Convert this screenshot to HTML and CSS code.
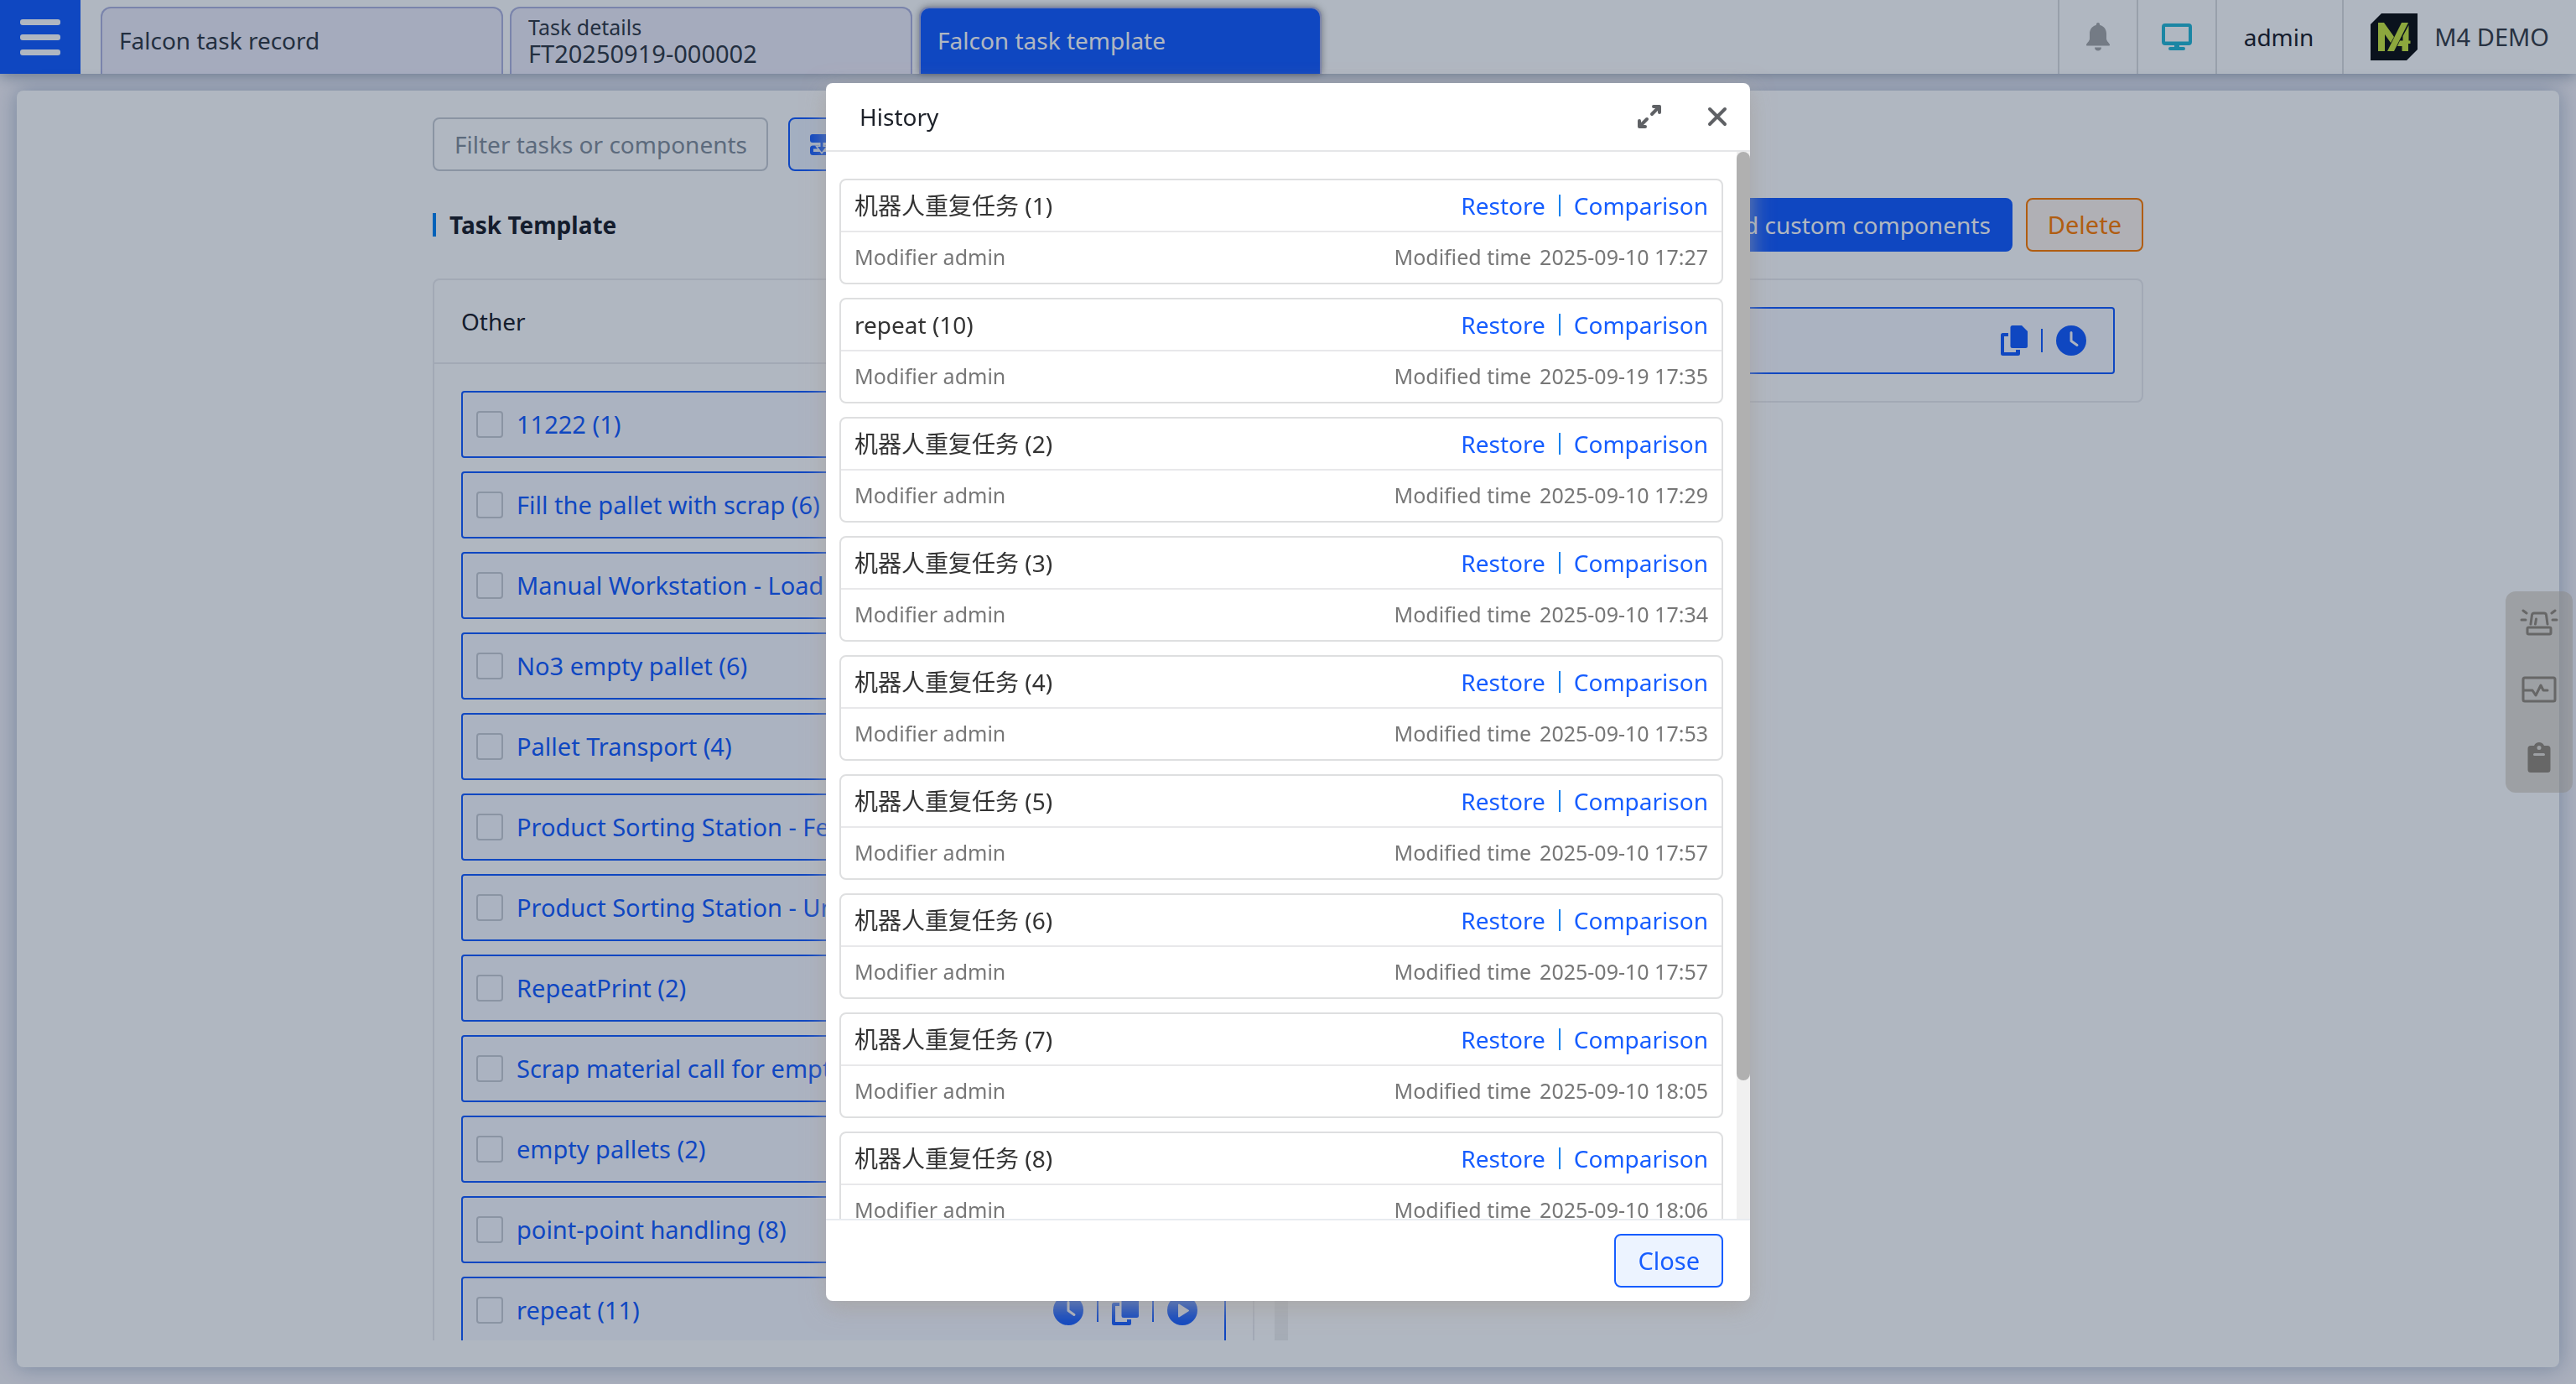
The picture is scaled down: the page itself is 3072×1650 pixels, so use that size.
FILE: index.html
```html
<!DOCTYPE html>
<html lang="en">
<head>
<meta charset="utf-8">
<title>Falcon task template</title>
<link rel="stylesheet" href="styles.css">
</head>
<body>
<svg class="sprite" aria-hidden="true">
  <symbol id="clock" viewBox="0 0 36 36"><circle cx="18" cy="18" r="18"/><path d="M18 8.500v10l7 5" fill="none" stroke="#f8f9ff" stroke-width="3" stroke-linecap="round" stroke-linejoin="round"/></symbol>
  <symbol id="copy" viewBox="0 0 32 36"><path d="M14 0h11l7 7v17.500a2.500 2.500 0 0 1-2.500 2.500H14a2.500 2.500 0 0 1-2.500-2.500v-22A2.500 2.500 0 0 1 14 0z"/><path d="M9 9v4H4v19h14v-3h5v4.500a2.500 2.500 0 0 1-2.500 2.500h-18A2.500 2.500 0 0 1 0 33.500v-22A2.500 2.500 0 0 1 2.500 9z"/></symbol>
  <symbol id="play" viewBox="0 0 36 36"><circle cx="18" cy="18" r="18"/><path d="M14 11.500v14l11-7z" fill="#f8f9ff" stroke="#f8f9ff" stroke-width="2" stroke-linejoin="round"/></symbol>
</svg>

<header class="topbar">
  <button class="menu" aria-label="Menu"><span></span><span></span><span></span></button>
  <nav class="tabs">
    <a class="tab" href="#record">Falcon task record</a>
    <a class="tab" href="#details"><small>Task details</small>FT20250919-000002</a>
    <a class="tab active" href="#template">Falcon task template</a>
  </nav>
  <div class="tools">
    <button class="cell icon-cell" aria-label="Notifications">
      <svg width="30" height="34" viewBox="0 0 30 34" fill="#a8a8a8"><path d="M15 0c1.500 0 2.200 1.200 2.200 3C22.500 4.200 25 8.500 25 13v6c0 3.500 4 5.500 4 7.500 0 .8-.4 1-1 1H2c-.6 0-1-.2-1-1C1 24.500 5 22.500 5 19v-6c0-4.500 2.500-8.800 7.800-10C12.800 1.200 13.500 0 15 0zM11 29.500h8c0 2.500-1.800 4-4 4s-4-1.500-4-4z"/></svg>
    </button>
    <button class="cell icon-cell" aria-label="Display">
      <svg width="36" height="32" viewBox="0 0 36 32" fill="none" stroke="#28b9d6"><rect x="2" y="2" width="32" height="22" rx="2" stroke-width="4"/><path d="M4 23.500h28" stroke-width="4"/><path d="M18 25v4" stroke-width="6"/><path d="M10 30h16" stroke-width="4" stroke-linecap="round"/></svg>
    </button>
    <div class="cell">admin</div>
    <div class="cell brand">
      <svg width="56" height="56" viewBox="0 0 56 56"><path d="M13 0h43v43L43 56H0V13z" fill="#0f1012"/><g fill="#cbe840"><path d="M9 11h7l10 14 2 3-4 7-7-10v20H9z"/><path d="M37 11h8L28 45h-8z"/><path d="M45.500 14v18.500H47.500V36H45v9h-7.500v-6H32l3-6.500h3.500V27z"/></g></svg>
      <span>M4 DEMO</span>
    </div>
  </div>
</header>

<main class="panel">
  <div class="content">
    <div class="filters">
      <input class="filter" type="text" placeholder="Filter tasks or components" aria-label="Filter tasks or components">
      <button class="btn soft" aria-label="Import">
        <svg width="28" height="25" viewBox="0 0 28 25" fill="#165dff"><rect width="28" height="10" rx="3"/><rect x="2" y="15.500" width="24" height="7.500" rx="1.500" fill="none" stroke="#165dff" stroke-width="4"/><path d="M12.500 10v5H9l5 6.500 5-6.500h-3.500v-5z" stroke="#ecf3ff" stroke-width="3" paint-order="stroke"/><rect x="4" width="20" height="10"/></svg>
      </button>
    </div>
    <div class="columns">
      <section class="column">
        <div class="column-head"><h2>Task Template</h2></div>
        <div class="scroller">
          <div class="scroll-view">
            <div class="card">
              <div class="card-head">Other</div>
              <ul class="items">
                <li class="item"><label><input type="checkbox">11222 (1)</label></li>
                <li class="item"><label><input type="checkbox">Fill the pallet with scrap (6)</label></li>
                <li class="item"><label><input type="checkbox">Manual Workstation - Load</label></li>
                <li class="item"><label><input type="checkbox">No3 empty pallet (6)</label></li>
                <li class="item"><label><input type="checkbox">Pallet Transport (4)</label></li>
                <li class="item"><label><input type="checkbox">Product Sorting Station - Feed</label></li>
                <li class="item"><label><input type="checkbox">Product Sorting Station - Unload</label></li>
                <li class="item"><label><input type="checkbox">RepeatPrint (2)</label></li>
                <li class="item"><label><input type="checkbox">Scrap material call for empty</label></li>
                <li class="item"><label><input type="checkbox">empty pallets (2)</label></li>
                <li class="item"><label><input type="checkbox">point-point handling (8)</label></li>
                <li class="item"><label><input type="checkbox">repeat (11)</label>
                  <span class="actions">
                    <button aria-label="History"><svg width="36" height="36"><use href="#clock"/></svg></button>
                    <button aria-label="Copy"><svg width="32" height="36"><use href="#copy"/></svg></button>
                    <button aria-label="Run"><svg width="36" height="36"><use href="#play"/></svg></button>
                  </span>
                </li>
              </ul>
            </div>
          </div>
          <div class="rail"></div>
        </div>
      </section>
      <section class="column">
        <div class="column-head end">
          <button class="btn primary">Add custom components</button>
          <button class="btn warn">Delete</button>
        </div>
        <div class="card">
          <ul class="items">
            <li class="item">
              <span class="actions">
                <button aria-label="Copy"><svg width="32" height="36"><use href="#copy"/></svg></button>
                <button aria-label="History"><svg width="36" height="36"><use href="#clock"/></svg></button>
              </span>
            </li>
          </ul>
        </div>
      </section>
    </div>
  </div>
</main>

<div class="backdrop">
  <div class="modal" role="dialog" aria-modal="true" aria-labelledby="dialog-title">
    <header class="modal-head">
      <h1 id="dialog-title">History</h1>
      <button aria-label="Full screen"><svg width="30" height="28" viewBox="0 0 30 28" fill="none" stroke="#5f6165" stroke-width="4" stroke-linecap="round" stroke-linejoin="round"><path d="M20 2h7v7M26 3l-8 8M3 19v7h7M4 25l8-8"/></svg></button>
      <button aria-label="Close dialog"><svg width="24" height="24" viewBox="0 0 24 24" fill="none" stroke="#5f6165" stroke-width="4" stroke-linecap="round"><path d="M3 3l18 18M21 3L3 21"/></svg></button>
    </header>
    <div class="modal-body">
      <div class="scroll-view versions">
        <article class="version"><div class="line"><span>机器人重复任务 (1)</span><span class="links"><a href="#r">Restore</a><a href="#c">Comparison</a></span></div><div class="line meta"><span>Modifier admin</span><span class="when"><span>Modified time</span><time>2025-09-10 17:27</time></span></div></article>
        <article class="version"><div class="line"><span>repeat (10)</span><span class="links"><a href="#r">Restore</a><a href="#c">Comparison</a></span></div><div class="line meta"><span>Modifier admin</span><span class="when"><span>Modified time</span><time>2025-09-19 17:35</time></span></div></article>
        <article class="version"><div class="line"><span>机器人重复任务 (2)</span><span class="links"><a href="#r">Restore</a><a href="#c">Comparison</a></span></div><div class="line meta"><span>Modifier admin</span><span class="when"><span>Modified time</span><time>2025-09-10 17:29</time></span></div></article>
        <article class="version"><div class="line"><span>机器人重复任务 (3)</span><span class="links"><a href="#r">Restore</a><a href="#c">Comparison</a></span></div><div class="line meta"><span>Modifier admin</span><span class="when"><span>Modified time</span><time>2025-09-10 17:34</time></span></div></article>
        <article class="version"><div class="line"><span>机器人重复任务 (4)</span><span class="links"><a href="#r">Restore</a><a href="#c">Comparison</a></span></div><div class="line meta"><span>Modifier admin</span><span class="when"><span>Modified time</span><time>2025-09-10 17:53</time></span></div></article>
        <article class="version"><div class="line"><span>机器人重复任务 (5)</span><span class="links"><a href="#r">Restore</a><a href="#c">Comparison</a></span></div><div class="line meta"><span>Modifier admin</span><span class="when"><span>Modified time</span><time>2025-09-10 17:57</time></span></div></article>
        <article class="version"><div class="line"><span>机器人重复任务 (6)</span><span class="links"><a href="#r">Restore</a><a href="#c">Comparison</a></span></div><div class="line meta"><span>Modifier admin</span><span class="when"><span>Modified time</span><time>2025-09-10 17:57</time></span></div></article>
        <article class="version"><div class="line"><span>机器人重复任务 (7)</span><span class="links"><a href="#r">Restore</a><a href="#c">Comparison</a></span></div><div class="line meta"><span>Modifier admin</span><span class="when"><span>Modified time</span><time>2025-09-10 18:05</time></span></div></article>
        <article class="version"><div class="line"><span>机器人重复任务 (8)</span><span class="links"><a href="#r">Restore</a><a href="#c">Comparison</a></span></div><div class="line meta"><span>Modifier admin</span><span class="when"><span>Modified time</span><time>2025-09-10 18:06</time></span></div></article>
      </div>
      <div class="rail"><div class="thumb"></div></div>
    </div>
    <footer class="modal-foot"><button class="btn soft">Close</button></footer>
  </div>
</div>

<aside class="dock">
  <button aria-label="Alarms"><svg width="46" height="34" viewBox="0 0 46 34" fill="none" stroke="#676767" stroke-width="3" stroke-linecap="round"><rect x="9" y="23" width="28" height="8" rx="1.500"/><path d="M13 19l1.500-11Q15 6 17 6h12q2 0 2.500 2L33 19M19.500 13l-1 6M4 3l4 3M42 3l-4 3M2 14h5M44 14h-5"/></svg></button>
  <button aria-label="Monitoring"><svg width="42" height="32" viewBox="0 0 42 32" fill="none" stroke="#676767" stroke-width="3" stroke-linecap="round" stroke-linejoin="round"><rect x="2" y="2" width="38" height="28" rx="2"/><path d="M3 17h10l4 6 6-12 3 6h5"/></svg></button>
  <button aria-label="Clipboard"><svg width="28" height="36" viewBox="0 0 28 36" fill="#676767"><path fill-rule="evenodd" d="M4 4h4c1-2.500 3.500-4 6-4s5 1.500 6 4h4a3.500 3.500 0 0 1 3.500 3.500v25A3.500 3.500 0 0 1 24 36H4a3.500 3.500 0 0 1-3.500-3.500v-25A3.500 3.500 0 0 1 4 4zm10 0a2.500 2.500 0 1 0 0 5 2.500 2.500 0 0 0 0-5zM8.500 13a1 1 0 0 0 0 3h11a1 1 0 0 0 0-3z"/></svg></button>
</aside>
</body>
</html>
```
FILE: styles.css
```css
:root {
  --blue: #165dff;
  --soft: #ecf3ff;
  --line: #ebebee;
  --ink: #1d2129;
}

* { box-sizing: border-box; }

body {
  margin: 0;
  height: 100vh;
  display: flex;
  flex-direction: column;
  gap: 20px;
  overflow: hidden;
  background: #f5f3f8;
  color: var(--ink);
  font: 28px/40px "Noto Sans", "Noto Sans CJK SC", sans-serif;
}

button, input { font: inherit; color: inherit; }
button { padding: 0; border: 0; background: none; cursor: pointer; }
a { color: inherit; text-decoration: none; }
h1, h2 { margin: 0; font-size: 28px; }
svg { display: block; }
.sprite { position: absolute; width: 0; height: 0; }

/* Top bar */
.topbar {
  flex: none;
  display: flex;
  height: 88px;
  background: #fff;
  box-shadow: 0 2px 16px rgba(0, 40, 80, .4);
}
.menu {
  width: 96px;
  display: flex;
  flex-direction: column;
  align-items: center;
  justify-content: center;
  gap: 11px;
  background: var(--blue);
}
.menu span { width: 48px; height: 7px; border-radius: 3px; background: #fff; }
.tabs { flex: 1; display: flex; gap: 8px; padding: 8px 0 0 24px; }
.tab {
  width: 480px;
  padding: 0 20px 2px;
  display: flex;
  flex-direction: column;
  justify-content: center;
  border: 2px solid #b1b5e0;
  border-bottom: 0;
  border-radius: 12px 12px 0 0;
  background: #f0eefa;
  color: #333a44;
  font-size: 28px;
  line-height: 32px;
}
.tab:nth-child(2) { font-size: 29px; }
.tab small { font-size: 25px; }
.tab.active { background: var(--blue); color: #fff; box-shadow: 0 0 8px rgba(0, 0, 0, .4); }
.tools { display: flex; }
.cell {
  display: flex;
  align-items: center;
  gap: 20px;
  padding: 0 34px 0 32px;
  border-left: 2px solid #dcdee0;
}
.icon-cell { width: 94px; padding: 0; justify-content: center; }
.brand { padding-right: 32px; color: #3a3f47; font-size: 29px; }

/* Page panel */
.panel {
  flex: 1;
  min-height: 0;
  margin: 0 20px 20px;
  padding: 32px 0;
  border-radius: 8px;
  background: #fff;
  box-shadow: 0 0 24px rgba(0, 50, 110, .3);
}
.content {
  max-width: 2040px;
  height: 100%;
  margin: 0 auto;
  display: flex;
  flex-direction: column;
  gap: 32px;
}
.filters { display: flex; gap: 24px; }
.filter {
  width: 400px;
  height: 64px;
  padding: 0 16px 0 24px;
  border: 2px solid #c9cdd4;
  border-radius: 8px;
  background: transparent;
}
.filter::placeholder { color: #86909c; opacity: 1; }

.btn { height: 64px; padding: 0 24px; border: 2px solid; border-radius: 8px; font-size: 29px; }
.soft { border-color: var(--blue); background: var(--soft); color: var(--blue); }
.primary { border-color: var(--blue); background: var(--blue); color: #fff; font-size: 28px; }
.warn { border-color: #ff7d00; background: #fff5ee; color: #ff7d00; }

.columns { flex: 1; min-height: 0; display: grid; grid-template-columns: 1fr 1fr; }
.column { min-width: 0; min-height: 0; display: flex; flex-direction: column; gap: 32px; }
.column + .column { padding-left: 24px; }
.column-head { flex: none; height: 64px; display: flex; align-items: center; gap: 16px; }
.end { justify-content: flex-end; }
h2 { padding-left: 16px; border-left: 4px solid #0084f4; line-height: 28px; }

.scroller { flex: 1; min-height: 0; display: flex; gap: 24px; }
.scroll-view { flex: 1; min-width: 0; overflow: hidden; }
.rail { flex: none; width: 16px; background: #f0f0f0; }
.thumb { height: 87%; border-radius: 8px; background: #b0b0b0; }
.card { border: 2px solid var(--line); border-radius: 8px; }
.card-head { padding: 29px 32px; border-bottom: 2px solid var(--line); }
.items { margin: 0; padding: 32px; list-style: none; display: flex; flex-direction: column; gap: 16px; }
.item {
  height: 80px;
  padding: 0 32px 0 16px;
  display: flex;
  align-items: center;
  border: 2px solid var(--blue);
  border-radius: 4px;
  background: #f8f9ff;
  color: var(--blue);
  font-size: 29px;
}
.item label { display: flex; align-items: center; gap: 16px; white-space: nowrap; }
.item input {
  appearance: none;
  width: 32px;
  height: 32px;
  margin: 0;
  border: 2px solid #c9cdd4;
  border-radius: 4px;
}
.actions { margin-left: auto; display: flex; align-items: center; fill: var(--blue); }
.actions button + button { display: flex; align-items: center; gap: 16px; margin-left: 16px; }
.actions button + button::before { content: ""; width: 2px; height: 28px; background: var(--blue); }

/* History dialog */
.backdrop {
  position: fixed;
  inset: 0;
  display: flex;
  align-items: center;
  justify-content: center;
  background: rgba(0, 23, 55, .31);
}
.modal {
  width: 1102px;
  max-width: 90vw;
  height: 88vh;
  display: flex;
  flex-direction: column;
  overflow: hidden;
  border-radius: 8px;
  background: #fff;
  box-shadow: 0 8px 28px rgba(165, 160, 155, .7);
}
.modal-head {
  flex: none;
  height: 82px;
  padding: 0 27px 0 40px;
  display: flex;
  align-items: center;
  gap: 54px;
  border-bottom: 2px solid #e5e6e8;
}
h1 { flex: 1; font-weight: 400; }
.modal-body { flex: 1; min-height: 0; display: flex; }
.versions { padding: 32px 16px; display: flex; flex-direction: column; gap: 16px; }
.version { flex: none; border: 2px solid #dedfe0; border-radius: 8px; color: #333; }
.line { height: 60px; padding: 0 16px; display: flex; align-items: center; justify-content: space-between; }
.meta { height: 62px; padding-bottom: 2px; border-top: 2px solid #e8e8ea; color: #777; font-size: 25px; }
.links { display: flex; align-items: center; color: var(--blue); }
.links a + a { display: flex; align-items: center; gap: 16px; margin-left: 16px; }
.links a + a::before { content: ""; width: 2px; height: 26px; background: #1482f0; }
.when { display: flex; gap: 10px; }
.modal-foot {
  flex: none;
  padding: 16px 32px;
  display: flex;
  justify-content: flex-end;
  border-top: 2px solid #e8ebf0;
}
.modal-foot .btn { padding: 0 26px; }

/* Side dock */
.dock {
  position: fixed;
  top: 50%;
  right: 4px;
  width: 80px;
  height: 240px;
  transform: translateY(-50%);
  padding: 20px 0 24px;
  display: flex;
  flex-direction: column;
  align-items: center;
  justify-content: space-between;
  border-radius: 12px;
  background: rgba(138, 138, 136, .5);
}
```
